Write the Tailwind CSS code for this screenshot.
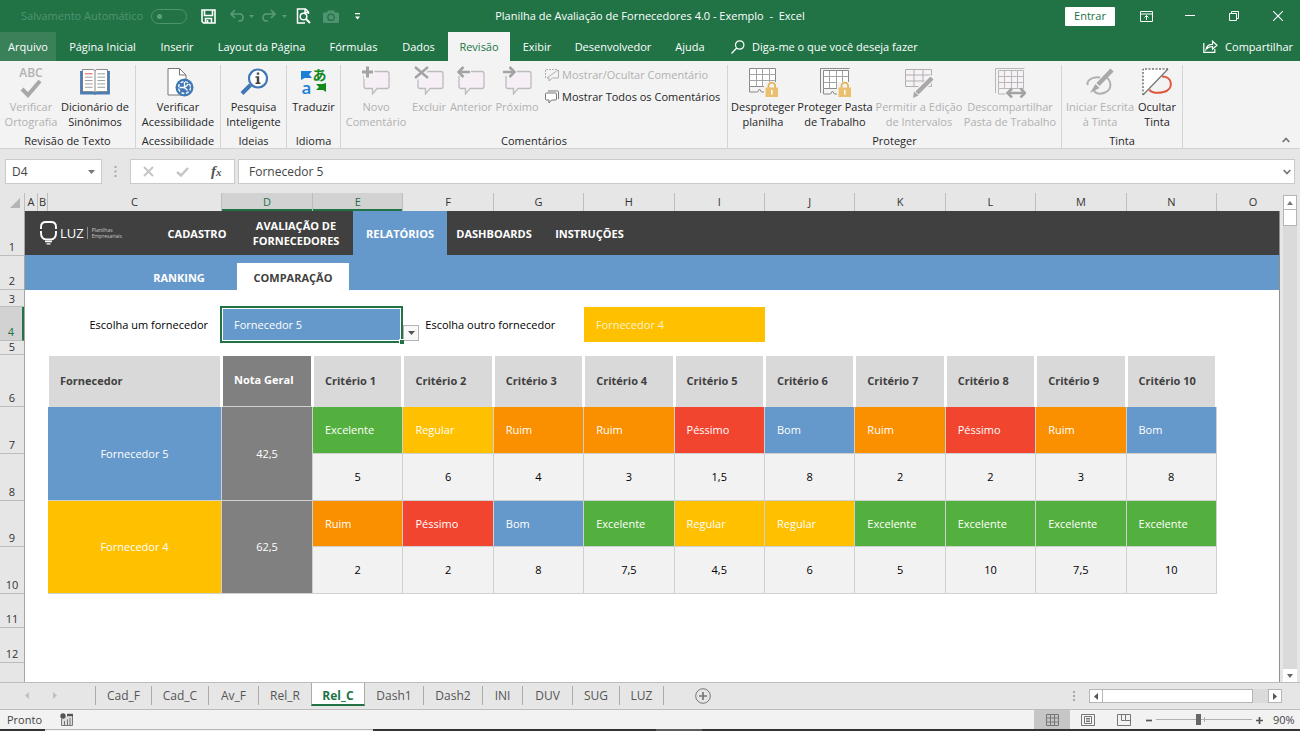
<!DOCTYPE html>
<html lang="pt-BR">
<head>
<meta charset="utf-8">
<meta name="viewport" content="width=device-width, initial-scale=1">
<title>Planilha de Avaliação de Fornecedores 4.0 - Exemplo - Excel</title>
<script src="https://cdn.jsdelivr.net/npm/@tailwindcss/browser@4"></script>
</head>
<body class="flex h-screen flex-col overflow-hidden bg-[#e6e6e6] font-['Open_Sans','Noto_Sans',sans-serif] text-[11px] leading-4 text-[#262626]">

<!-- Title bar and ribbon tabs -->
<header class="bg-[#217346] text-white">
  <div class="grid h-8 grid-cols-[1fr_auto_1fr] items-center">
    <div class="flex items-center pl-[21px]">
      <label for="autosave" class="w-[130px] whitespace-nowrap text-[#4f9470]">Salvamento Automático</label>
      <input id="autosave" type="checkbox" disabled class="h-[15px] w-9 appearance-none rounded-full border border-[#4f9470] before:ml-[5px] before:mt-[4px] before:block before:size-[5px] before:rounded-full before:bg-[#5f9f7e]">
      <button aria-label="Salvar" class="ml-[14px]"><svg class="size-[15px]" viewBox="0 0 15 15" fill="none" stroke="#fff" stroke-width="1.6"><path d="M1 1h13v13H2.500L1 12.500zM3.500 1v5.500h8V1M4.500 14V9.500h6V14M6.500 11v3"/></svg></button>
      <button aria-label="Desfazer" disabled class="ml-[13px]"><svg class="h-[14px] w-[25px]" viewBox="0 0 25 14" fill="none" stroke="#5a9a79" stroke-width="1.700"><path d="M6 1 2 5l4 4M2 5h8a3.500 3.500 0 0 1 1 7H9"/><path d="M20 6h5l-2.500 3z" fill="#5a9a79" stroke="none"/></svg></button>
      <button aria-label="Refazer" disabled class="ml-[8px]"><svg class="h-[14px] w-[25px]" viewBox="0 0 25 14" fill="none" stroke="#5a9a79" stroke-width="1.700"><path d="m9 1 4 4-4 4M13 5H5a3.500 3.500 0 0 0-1 7h2"/><path d="M20 6h5l-2.500 3z" fill="#5a9a79" stroke="none"/></svg></button>
      <button aria-label="Visualizar impressão" class="ml-[9px]"><svg class="h-4 w-[15px]" viewBox="0 0 15 16" fill="none" stroke="#fff" stroke-width="1.500"><path d="M12.500 6V4L9.500 1H1.500v14H9M9 1v3.500h3.500" /><circle cx="7.500" cy="8.500" r="3.300"/><path d="m10 11 4 4" stroke-width="2"/></svg></button>
      <button aria-label="Câmera" disabled class="ml-[12px]"><svg class="h-[13px] w-[16px]" viewBox="0 0 16 13"><path fill="#4f9470" d="M1 2.500h3L5 .5h6l1 2h3a1 1 0 0 1 1 1V12a1 1 0 0 1-1 1H1a1 1 0 0 1-1-1V3.500a1 1 0 0 1 1-1z"/><circle cx="8" cy="7.300" r="3.200" fill="none" stroke="#217346" stroke-width="1.300"/></svg></button>
      <button aria-label="Personalizar acesso rápido" class="ml-[16px]"><svg class="h-[7px] w-[5px]" viewBox="0 0 5 7" fill="#fff"><path d="M0 0h5v1.300H0zM0 3.500h5L2.500 6.500z"/></svg></button>
    </div>
    <h1 class="whitespace-pre">Planilha de Avaliação de Fornecedores 4.0 - Exemplo  -  Excel</h1>
    <div class="flex items-center justify-end">
      <button class="mr-[9px] h-[19px] w-[50px] rounded-[1px] bg-white leading-4 text-[#217346]">Entrar</button>
      <button aria-label="Opções da faixa" class="flex w-11 justify-center"><svg class="h-[11px] w-[13px]" viewBox="0 0 13 11" fill="none" stroke="#fff"><path d="M.5.5h12v10H.5zM.5 3h12M6.500 9V4.500M4.500 6.500l2-2 2 2"/></svg></button>
      <button aria-label="Minimizar" class="flex w-11 justify-center"><svg class="h-[11px] w-[10px]" viewBox="0 0 10 11" stroke="#fff"><path d="M0 4.500h10"/></svg></button>
      <button aria-label="Restaurar" class="flex w-11 justify-center"><svg class="size-[10px]" viewBox="0 0 10 10" fill="none" stroke="#fff"><path d="M.5 2.500h7v7h-7zM2.500 2.500v-2h7v7h-2"/></svg></button>
      <button aria-label="Fechar" class="flex w-11 justify-center"><svg class="size-[10px]" viewBox="0 0 10 10" stroke="#fff" stroke-width="1.100"><path d="m0 0 10 10M10 0 0 10"/></svg></button>
    </div>
  </div>
  <nav class="flex h-[29px] items-stretch font-medium">
    <button class="w-14 bg-[#3a8159]">Arquivo</button>
    <button class="w-[93px]">Página Inicial</button>
    <button class="w-14">Inserir</button>
    <button class="w-[113px]">Layout da Página</button>
    <button class="w-[71px]">Fórmulas</button>
    <button class="w-[59px]">Dados</button>
    <button class="w-[62px] bg-[#f3f3f3] text-[#217346]">Revisão</button>
    <button class="w-[54px]">Exibir</button>
    <button class="w-[98px]">Desenvolvedor</button>
    <button class="w-14">Ajuda</button>
    <button class="flex items-center gap-[7px] pl-[13px]"><svg class="size-[14px]" viewBox="0 0 14 14" fill="none" stroke="#fff" stroke-width="1.200"><circle cx="8.700" cy="5" r="4.200"/><path d="M5.700 8 .5 13.500"/></svg>Diga-me o que você deseja fazer</button>
    <button class="ml-auto flex items-center gap-[7px] pr-[7px]"><svg class="h-[13px] w-[15px]" viewBox="0 0 15 13" fill="none" stroke="#fff" stroke-width="1.200"><path d="M.8 3v9.400h11V9M3 9.500C3.500 6 6 4.300 9.500 4.300V1.200l4.500 4-4.500 4V6.500C7 6.500 5 7 3 9.500z"/></svg>Compartilhar</button>
  </nav>
</header>

<!-- Ribbon -->
<section aria-label="Revisão" class="flex h-[88px] border-b border-[#d2d2d2] bg-[#f3f3f3] pt-1 leading-[15px]">
  <div class="flex w-[136px] flex-col border-r border-[#d5d5d5]">
    <div class="flex h-[68px]">
      <button disabled class="flex w-[62px] flex-col items-center whitespace-nowrap text-[#b1b1b1]">
        <span class="flex h-[34px] w-full flex-col items-center"><span class="text-[12px] font-semibold leading-[15px]">ABC</span><svg class="h-[18px] w-[22px]" viewBox="0 0 22 18" fill="none" stroke="#a8a8a8" stroke-width="4"><path d="m2 9 6 6L20 1"/></svg></span>Verificar<br>Ortografia</button>
      <button class="flex w-[66px] flex-col items-center whitespace-nowrap">
        <span class="flex h-[34px] items-start pt-[4px]"><svg class="h-[26px] w-[30px]" viewBox="0 0 31 27"><path fill="#4a7eb8" d="M0 2h31v24.500H17l-1.500.5-1.500-.5H0z"/><path fill="#fff" stroke="#666" stroke-width=".8" d="M2.500.5H13q2 0 2.500 1.500Q16 .5 18 .5h10.500v23H18q-2 0-2.500 1-.5-1-2.500-1H2.500zM15.500 2v22"/><path stroke="#9a9a9a" d="M5 8.500h8M5 12h8M5 15.500h8M5 19h8M18 5h8M18 8.500h8M18 12h8M18 15.500h8M18 19h8"/><path stroke="#d8543c" d="M5 5h8"/></svg></span>Dicionário de<br>Sinônimos</button>
    </div>
    <span class="text-center">Revisão de Texto</span>
  </div>
  <div class="flex w-[85px] flex-col border-r border-[#d5d5d5]">
    <button class="flex h-[68px] flex-col items-center whitespace-nowrap">
      <span class="flex h-[34px] items-start pl-[4px] pt-[3px]"><svg class="h-[29px] w-[27px]" viewBox="0 0 27 29"><path fill="#fff" stroke="#777" d="M1 .5h11.500L19 7v20H1z"/><path fill="none" stroke="#777" d="M12.500.5V7H19"/><circle cx="17.500" cy="19.500" r="9" fill="#3f78b5"/><g fill="none" stroke="#fff" stroke-width="1.300"><circle cx="17.500" cy="19.500" r="6" stroke-dasharray="3 1.700"/><path d="M17.500 14v5.500l4-3.500M17.500 19.500h-5M17.500 19.500l3 3"/></g></svg></span>Verificar<br>Acessibilidade</button>
    <span class="text-center">Acessibilidade</span>
  </div>
  <div class="flex w-[66px] flex-col border-r border-[#d5d5d5]">
    <button class="flex h-[68px] flex-col items-center whitespace-nowrap">
      <span class="flex h-[34px] items-start pt-[3px]"><svg class="h-[28px] w-[28px]" viewBox="0 0 28 28"><path stroke="#3f78b5" stroke-width="4" d="m2 25.500 8.500-8.500"/><circle cx="18" cy="10.500" r="9" fill="#fff" stroke="#3f78b5" stroke-width="2.200"/><path fill="#444" d="M16.800 4.500h2.400v2.200h-2.400zM15.500 8.300h3.700v6.200h1.300V16h-5v-1.500h1.300V9.800h-1.300z"/></svg></span>Pesquisa<br>Inteligente</button>
    <span class="text-center">Ideias</span>
  </div>
  <div class="flex w-[54px] flex-col border-r border-[#d5d5d5]">
    <button class="flex h-[68px] flex-col items-center whitespace-nowrap">
      <span class="grid h-[34px] grid-cols-[12px_14px] grid-rows-[15px_16px] content-start text-center font-semibold"><svg class="mt-[6px] h-[9px] w-[11px]" viewBox="0 0 11 9" fill="#1a7fd6"><path d="M0 0h11L8 3.500 11 7H3.500L0 9z"/></svg><span class="font-['Noto_Sans_CJK_JP',sans-serif] text-[14px] leading-[18px] text-[#128a1c]">あ</span><span class="text-[17px] leading-[16px] text-[#1a7fd6]">a</span><svg class="ml-[3px] mt-[3px] h-[9px] w-[10px]" viewBox="0 0 10 9" fill="#128a1c"><path d="M0 1h6.500L10 0v9L7 7H0l3-3z"/></svg></span>Traduzir</button>
    <span class="text-center">Idioma</span>
  </div>
  <div class="flex w-[387px] flex-col border-r border-[#d5d5d5]">
    <div class="flex h-[68px]">
      <button disabled class="flex w-[70px] flex-col items-center whitespace-nowrap text-[#b1b1b1]">
        <span class="flex h-[34px] items-start pt-[1px]"><svg class="h-[29px] w-[28px]" viewBox="0 0 28 29"><path fill="#f6eff6" stroke="#bcbcbc" stroke-width="1.300" d="M4 5.500h21q2 0 2 2v13q0 2-2 2H15L10.500 28v-5.500H4q-2 0-2-2v-13q0-2 2-2z"/><path stroke="#f3f3f3" stroke-width="7" d="M5.500 0v13M0 6h12.500"/><path stroke="#a3a3a3" stroke-width="3" d="M5.500.5v11M0 6h11"/></svg></span>Novo<br>Comentário</button>
      <button disabled class="flex w-9 flex-col items-center whitespace-nowrap text-[#b1b1b1]">
        <span class="flex h-[34px] items-start pt-[1px]"><svg class="h-[29px] w-[30px]" viewBox="0 0 30 29"><path fill="#f6eff6" stroke="#bcbcbc" stroke-width="1.300" d="M6 5.500h21q2 0 2 2v13q0 2-2 2H16L11.500 28v-5.500H6q-2 0-2-2v-13q0-2 2-2z"/><path stroke="#f3f3f3" stroke-width="6" d="m0 0 15 13M15 0 0 13"/><path stroke="#a3a3a3" stroke-width="2.400" d="m1 1 13 11M14 1 1 12"/></svg></span>Excluir</button>
      <button disabled class="flex w-12 flex-col items-center whitespace-nowrap text-[#b1b1b1]">
        <span class="flex h-[34px] items-start pt-[1px]"><svg class="h-[29px] w-[28px]" viewBox="0 0 28 29"><path fill="#f6eff6" stroke="#bcbcbc" stroke-width="1.300" d="M4 5.500h21q2 0 2 2v13q0 2-2 2H13L8.500 28v-5.500H4q-2 0-2-2v-13q0-2 2-2z"/><path stroke="#f3f3f3" stroke-width="8" d="M0 6h14"/><path fill="none" stroke="#a3a3a3" stroke-width="2.500" d="M13 6H2M6.500 1 1.500 6l5 5"/></svg></span>Anterior</button>
      <button disabled class="flex w-11 flex-col items-center whitespace-nowrap text-[#b1b1b1]">
        <span class="flex h-[34px] items-start pt-[1px]"><svg class="h-[29px] w-[29px]" viewBox="0 0 29 29"><path fill="#f6eff6" stroke="#bcbcbc" stroke-width="1.300" d="M5 5.500h21q2 0 2 2v13q0 2-2 2H15L10.500 28v-5.500H5q-2 0-2-2v-13q0-2 2-2z"/><path stroke="#f3f3f3" stroke-width="8" d="M0 6h14"/><path fill="none" stroke="#a3a3a3" stroke-width="2.500" d="M0 6h11M6.500 1l5 5-5 5"/></svg></span>Próximo</button>
      <div class="flex flex-col items-start gap-[7px] pl-[6px] pt-[2px]">
        <button disabled class="flex items-center gap-[3px] whitespace-nowrap text-[#b1b1b1]"><svg class="h-[14px] w-[14px]" viewBox="0 0 14 14" fill="none" stroke="#b0b0b0"><path stroke-dasharray="2 1" d="M.5 10V1.500h12"/><path d="M13.500 2v8H7.500L4 13v-3H2L13 2"/></svg>Mostrar/Ocultar Comentário</button>
        <button class="flex items-center gap-[3px] whitespace-nowrap"><svg class="h-[14px] w-[14px]" viewBox="0 0 14 14" fill="#fff" stroke="#777"><path d="M3 1h9.500q1 0 1 1v7"/><path d="M1.500 3h9q1 0 1 1v5q0 1-1 1H6.500L4 13v-3H1.500q-1 0-1-1V4q0-1 1-1z"/></svg>Mostrar Todos os Comentários</button>
      </div>
    </div>
    <span class="text-center">Comentários</span>
  </div>
  <div class="flex w-[334px] flex-col border-r border-[#d5d5d5]">
    <div class="flex h-[68px]">
      <button class="flex w-[70px] flex-col items-center whitespace-nowrap">
        <span class="flex h-[34px] items-start pt-[3px]"><svg class="h-[30px] w-[29px]" viewBox="0 0 29 30"><path fill="#fff" stroke="#8a8a8a" d="M.5.5h26v18H.5z"/><path fill="none" stroke="#a5a5a5" d="M.5 6.500h26M.5 12.500h26M7.500.5v18M13.500.5v18M20.500.5v18"/><path fill="#f3f3f3" stroke="#888" d="M.5 18.500V24h8l2-3 2 3h4"/><path fill="#f3f3f3" d="M15 14h14v16H15z"/><path fill="none" stroke="#e3b45c" stroke-width="1.800" d="M19.500 21v-3a3.300 3.300 0 0 1 6.600 0v3"/><path fill="#eac06f" d="M16.500 19.500H29V29H16.500z"/><path stroke="#fff" stroke-width="1.600" d="M22.800 22v4.500"/></svg></span>Desproteger<br>planilha</button>
      <button class="flex w-[74px] flex-col items-center whitespace-nowrap">
        <span class="flex h-[34px] items-start pt-[3px]"><svg class="h-[30px] w-[31px]" viewBox="0 0 31 30"><path fill="none" stroke="#888" d="M.5 25V.5h29"/><path fill="#fff" stroke="#8a8a8a" d="M3.500 2.500h25v18h-25z"/><path fill="none" stroke="#a5a5a5" d="M3.500 8.500h25M3.500 14.500h25M9.500 2.500v18M16.500 2.500v18M22.500 2.500v18"/><path fill="#f3f3f3" stroke="#888" d="M3.500 20.500V26h7l2-3 2 3h3"/><path fill="#f3f3f3" d="M17 14h14v16H17z"/><path fill="none" stroke="#e3b45c" stroke-width="1.800" d="M21.500 21v-3a3.300 3.300 0 0 1 6.600 0v3"/><path fill="#eac06f" d="M18.500 19.500H31V29H18.500z"/><path stroke="#fff" stroke-width="1.600" d="M24.800 22v4.500"/></svg></span>Proteger Pasta<br>de Trabalho</button>
      <button disabled class="flex w-[94px] flex-col items-center whitespace-nowrap text-[#b1b1b1]">
        <span class="flex h-[34px] items-start pt-[4px]"><svg class="h-[29px] w-[29px]" viewBox="0 0 29 29"><path fill="#f6f2f6" stroke="#b0b0b0" d="M.5.500h26v17H.5zM.5 6h26M.5 12h26M9 .5v17M18 .5v17"/><path stroke="#f3f3f3" stroke-width="7" d="M28 8 10 26"/><path stroke="#a8a8a8" stroke-width="4.500" d="M27 9 12 24"/><path fill="#a8a8a8" d="m9 22.500 4.500 4L8 29z"/></svg></span>Permitir a Edição<br>de Intervalos</button>
      <button disabled class="flex w-[88px] flex-col items-center text-[#b1b1b1]">
        <span class="flex h-[34px] items-start pt-[3px]"><svg class="h-[30px] w-[31px]" viewBox="0 0 31 30"><path fill="none" stroke="#b8b8b8" d="M.5 25V.5h29"/><path fill="#f6f2f6" stroke="#b8b8b8" d="M3.500 2.500h25v18h-25zM3.500 8.500h25M3.500 14.500h25M9.500 2.500v18M16.500 2.500v18M22.500 2.500v18M3.500 20.500V26h7"/><path fill="none" stroke="#a3a3a3" stroke-width="2.600" d="M13 25h16M17 20.500 12.500 25l4.500 4.500M25.500 20.500 30 25l-4.500 4.500"/></svg></span><span class="whitespace-nowrap">Descompartilhar<br>Pasta de Trabalho</span></button>
    </div>
    <span class="text-center">Proteger</span>
  </div>
  <div class="flex w-[121px] flex-col border-r border-[#d5d5d5]">
    <div class="flex h-[68px]">
      <button disabled class="flex w-[76px] flex-col items-center whitespace-nowrap text-[#b1b1b1]">
        <span class="flex h-[34px] items-start pt-[3px]"><svg class="h-[29px] w-[28px]" viewBox="0 0 28 29" fill="none" stroke="#b0b0b0"><path stroke-width="2" d="M14 9.500C5 8 0 14 2 17M20 9c6 4 6 13-1 15.500C13 27 8 25 8 21.500"/><path stroke="#a8a8a8" stroke-width="4.500" d="M26 2 12 16.500"/><path fill="#a8a8a8" stroke="none" d="m9.500 16 4 4L4 25z"/></svg></span>Iniciar Escrita<br>à Tinta</button>
      <button class="flex w-[38px] flex-col items-center whitespace-nowrap">
        <span class="flex h-[34px] items-start pt-[3px]"><svg class="h-[29px] w-[30px]" viewBox="0 0 30 29" fill="none"><path stroke="#e0553d" stroke-width="2" d="M20 8.500c11 0 12 13 1.500 15.500C14 26 8 24 7.500 21.500"/><path fill="#fff" d="M1 1h25L1 27z"/><path stroke="#333" stroke-dasharray="2 1.500" d="M26 1H1v26"/><path stroke="#777" stroke-width="1.300" d="M26 1 1 27"/></svg></span>Ocultar<br>Tinta</button>
    </div>
    <span class="text-center">Tinta</span>
  </div>
  <button aria-label="Recolher faixa" class="mb-[5px] ml-auto mr-[10px] self-end"><svg class="h-[6px] w-[8px]" viewBox="0 0 8 6" fill="none" stroke="#777" stroke-width="1.800"><path d="m.7 5 3.300-3.500L7.300 5"/></svg></button>
</section>

<!-- Formula bar -->
<section aria-label="Barra de fórmulas" class="flex h-11 items-start pl-[5px] pr-[5px] pt-[10px] text-[12px]">
  <div class="flex h-[25px] w-[97px] items-center border border-[#cacaca] bg-white">
    <input aria-label="Caixa de nome" value="D4" class="min-w-0 flex-1 pl-[6px] text-[#444] outline-none">
    <button aria-label="Nomes" class="px-[6px]"><svg class="h-[4px] w-[7px]" viewBox="0 0 7 4" fill="#777"><path d="M0 0h7L3.500 4z"/></svg></button>
  </div>
  <svg class="ml-[12px] mt-[7px] h-[11px] w-[3px]" viewBox="0 0 3 11" fill="#a8a8a8"><path d="M.5 0h2v2h-2zM.5 4.500h2v2h-2zM.5 9h2v2h-2z"/></svg>
  <div class="ml-[13px] flex h-[25px] w-[105px] items-center border border-[#cacaca] bg-white">
    <button aria-label="Cancelar" disabled class="ml-[12px]"><svg class="size-[11px]" viewBox="0 0 11 11" stroke="#c4c4c4" stroke-width="1.800"><path d="m1 1 9 9M10 1l-9 9"/></svg></button>
    <button aria-label="Inserir" disabled class="ml-[22px]"><svg class="h-[10px] w-[13px]" viewBox="0 0 13 10" fill="none" stroke="#c4c4c4" stroke-width="2.400"><path d="m1 5 4 3.500L12 1"/></svg></button>
    <button aria-label="Inserir função" class="ml-[22px] font-['Liberation_Serif',serif] text-[15px] font-bold italic leading-4 text-[#555]">f<span class="text-[11px]">x</span></button>
  </div>
  <div class="ml-[3px] flex h-[25px] flex-1 items-center border border-[#cacaca] bg-white">
    <input aria-label="Fórmula" value="Fornecedor 5" class="min-w-0 flex-1 pl-[10px] text-[12px] text-[#444] outline-none">
    <button aria-label="Expandir" class="px-[3px]"><svg class="h-[6px] w-[8px]" viewBox="0 0 8 6" fill="none" stroke="#777" stroke-width="1.800"><path d="m.7 1 3.300 3.500L7.300 1"/></svg></button>
  </div>
</section>

<!-- Worksheet -->
<main class="flex min-h-0 flex-1">
  <div class="flex min-w-0 flex-1 flex-col">
    <div class="grid h-[18px] grid-cols-[25px_13px_10px_174px_91px_repeat(10,1fr)_63px] text-center leading-[18px] text-[#333] *:border-r *:border-[#bdbdbd]">
      <button aria-label="Selecionar tudo" class="flex items-end justify-end pb-[3px] pr-[4px]"><svg class="size-[10px]" viewBox="0 0 10 10" fill="#b5b5b5"><path d="M10 0v10H0z"/></svg></button>
      <div>A</div><div>B</div><div>C</div>
      <div class="bg-[#d2d2d2] text-[#217346] shadow-[inset_0_-2px_0_#217346]">D</div>
      <div class="bg-[#d2d2d2] text-[#217346] shadow-[inset_0_-2px_0_#217346]">E</div>
      <div>F</div><div>G</div><div>H</div><div>I</div><div>J</div><div>K</div><div>L</div><div>M</div><div>N</div>
      <div class="border-r-0! pl-[9px]">O</div>
    </div>
    <div class="flex min-h-0 flex-1">
      <div class="flex w-[25px] shrink-0 flex-col border-r border-[#a6a6a6] text-center text-[#333] *:flex *:shrink-0 *:items-end *:justify-center *:border-b *:border-[#bdbdbd] *:leading-[15px]">
        <div class="h-[45px] pb-px">1</div>
        <div class="h-[34px] pb-px">2</div>
        <div class="h-[17px]">3</div>
        <div class="h-[34px] border-r-2 border-r-[#217346]! bg-[#d2d2d2] pb-px text-[#217346]">4</div>
        <div class="h-[14px]">5</div>
        <div class="h-[52px] pb-px">6</div>
        <div class="h-[47px] pb-px">7</div>
        <div class="h-[47px] pb-px">8</div>
        <div class="h-[46px] pb-px">9</div>
        <div class="h-[47px] pb-px">10</div>
        <div class="h-[34px] pb-px">11</div>
        <div class="h-[35px] pb-px">12</div>
      </div>
      <div class="flex min-w-0 flex-1 flex-col border-r border-[#8f8f8f] bg-white">
        <nav class="flex h-11 shrink-0 items-stretch bg-[#404040] font-bold leading-[15px] text-white">
          <div class="flex w-[130px] items-center pl-[15px]">
            <svg class="h-[24px] w-[17px]" viewBox="0 0 17 24" fill="none" stroke="#fff" stroke-width="1.900"><path d="M1 8V6q0-5 5-5h5q5 0 5 5v2M1 10v2q0 6 5 6.500h5q5-.5 5-6.500v-2"/><path d="M5 20.500h7M6.500 22.800h4" stroke-width="1.300"/></svg>
            <span class="ml-[3px] text-[13px] font-medium">LUZ</span>
            <span class="ml-[3px] border-l border-[#8a8a8a] pl-[4px] text-[5px] font-normal leading-[6px] text-[#c8c8c8]">Planilhas<br>Empresariais</span>
          </div>
          <a href="#cadastro" class="flex w-[84px] items-center justify-center">CADASTRO</a>
          <a href="#avaliacao" class="flex w-[114px] items-center justify-center text-center">AVALIAÇÃO DE<br>FORNECEDORES</a>
          <a href="#relatorios" class="flex w-[94px] items-center justify-center bg-[#6699cb]">RELATÓRIOS</a>
          <a href="#dashboards" class="flex w-[94px] items-center justify-center">DASHBOARDS</a>
          <a href="#instrucoes" class="flex w-[97px] items-center justify-center">INSTRUÇÕES</a>
        </nav>
        <nav class="flex h-[35px] shrink-0 items-end bg-[#6699cb] pl-24 font-bold text-white">
          <a href="#ranking" class="flex h-[27px] w-[116px] items-center justify-center pt-[2px]">RANKING</a>
          <a href="#comparacao" class="flex h-[27px] w-[112px] items-center justify-center bg-white pt-[2px] text-[#404040]">COMPARAÇÃO</a>
        </nav>
        <div class="mt-4 grid h-[35px] shrink-0 grid-cols-[195px_93px_repeat(10,1fr)_63px] items-center text-black">
          <label for="forn-a" class="pr-[12px] text-right">Escolha um fornecedor</label>
          <div class="relative col-span-2 h-[37px] border-2 border-[#217346] bg-white p-px">
            <select id="forn-a" class="block size-full appearance-none bg-[#6699cb] pl-[11px] text-white outline-none"><option>Fornecedor 5</option><option>Fornecedor 4</option></select>
            <span class="pointer-events-none absolute -right-[18px] bottom-0 flex size-4 items-center justify-center border border-[#b5b5b5] bg-[#f8f8f8]"><svg class="h-[4px] w-[7px]" viewBox="0 0 7 4" fill="#555"><path d="M0 0h7L3.500 4z"/></svg></span>
            <span class="absolute -bottom-[3px] -right-[3px] size-[5px] border-l border-t border-white bg-[#217346]"></span>
          </div>
          <label for="forn-b" class="col-span-2 pl-[22px]">Escolha outro fornecedor</label>
          <select id="forn-b" class="col-span-2 h-[35px] appearance-none bg-[#ffc000] pl-[12px] text-[#fff3cc] outline-none"><option>Fornecedor 4</option><option>Fornecedor 5</option></select>
        </div>
        <div class="mt-[14px] pl-[23px] pr-[62px]">
          <table class="w-full table-fixed border-separate border-spacing-0 text-left text-white [&_td]:border-b [&_td]:border-r [&_td]:border-[#d0d0d0] [&_td]:py-0 [&_th]:border-l [&_th]:border-r-2 [&_th]:border-t [&_th]:border-white [&_th]:p-0 [&_th]:pb-[2px] [&_th]:pl-[11px]">
            <colgroup><col class="w-[174px]"><col class="w-[91px]"><col span="10"></colgroup>
            <thead>
              <tr class="h-[52px] bg-[#d9d9d9] font-semibold text-[#404040]">
                <th>Fornecedor</th><th class="border-b border-b-[#d0d0d0]! bg-[#808080] text-white">Nota Geral</th><th>Critério 1</th><th>Critério 2</th><th>Critério 3</th><th>Critério 4</th><th>Critério 5</th><th>Critério 6</th><th>Critério 7</th><th>Critério 8</th><th>Critério 9</th><th>Critério 10</th>
              </tr>
            </thead>
            <tbody>
              <tr class="h-[47px] *:pl-[12px]">
                <td rowspan="2" class="bg-[#6699cb] pl-0! text-center">Fornecedor 5</td>
                <td rowspan="2" class="bg-[#808080] pl-0! text-center">42,5</td>
                <td class="bg-[#54b03e]">Excelente</td><td class="bg-[#ffc000]">Regular</td><td class="bg-[#fa9000]">Ruim</td><td class="bg-[#fa9000]">Ruim</td><td class="bg-[#f2452f]">Péssimo</td><td class="bg-[#6699cb]">Bom</td><td class="bg-[#fa9000]">Ruim</td><td class="bg-[#f2452f]">Péssimo</td><td class="bg-[#fa9000]">Ruim</td><td class="bg-[#6699cb]">Bom</td>
              </tr>
              <tr class="h-[47px] bg-[#f2f2f2] text-center text-black"><td>5</td><td>6</td><td>4</td><td>3</td><td>1,5</td><td>8</td><td>2</td><td>2</td><td>3</td><td>8</td></tr>
              <tr class="h-[46px] *:pl-[12px]">
                <td rowspan="2" class="bg-[#ffc000] pl-0! text-center">Fornecedor 4</td>
                <td rowspan="2" class="bg-[#808080] pl-0! text-center">62,5</td>
                <td class="bg-[#fa9000]">Ruim</td><td class="bg-[#f2452f]">Péssimo</td><td class="bg-[#6699cb]">Bom</td><td class="bg-[#54b03e]">Excelente</td><td class="bg-[#ffc000]">Regular</td><td class="bg-[#ffc000]">Regular</td><td class="bg-[#54b03e]">Excelente</td><td class="bg-[#54b03e]">Excelente</td><td class="bg-[#54b03e]">Excelente</td><td class="bg-[#54b03e]">Excelente</td>
              </tr>
              <tr class="h-[47px] bg-[#f2f2f2] text-center text-black"><td>2</td><td>2</td><td>8</td><td>7,5</td><td>4,5</td><td>6</td><td>5</td><td>10</td><td>7,5</td><td>10</td></tr>
            </tbody>
          </table>
        </div>
      </div>
    </div>
  </div>
  <div class="flex w-5 flex-col px-[3px] pt-[2px]">
    <button aria-label="Rolar para cima" class="flex h-[15px] items-center justify-center border border-[#b5b5b5] bg-white"><svg class="h-[4px] w-[6px]" viewBox="0 0 6 4" fill="#777"><path d="M0 4h6L3 0z"/></svg></button>
    <div class="flex-1 bg-[#dadada]"><div class="h-4 border border-t-0 border-[#b5b5b5] bg-white"></div></div>
    <button aria-label="Rolar para baixo" class="flex h-[13px] items-center justify-center bg-white"><svg class="h-[4px] w-[6px]" viewBox="0 0 6 4" fill="#666"><path d="M0 0h6L3 4z"/></svg></button>
  </div>
</main>

<!-- Sheet tabs -->
<nav aria-label="Planilhas" class="flex h-7 items-start border-b border-t border-[#bdbdbd] text-[12px] text-[#555]">
  <div class="flex h-6 w-[95px] items-center gap-[24px] pl-[25px]">
    <button aria-label="Anterior"><svg class="h-[7px] w-[4px]" viewBox="0 0 4 7" fill="#c0c0c0"><path d="M4 0v7L0 3.500z"/></svg></button>
    <button aria-label="Próxima"><svg class="h-[7px] w-[4px]" viewBox="0 0 4 7" fill="#c0c0c0"><path d="M0 0v7l4-3.500z"/></svg></button>
  </div>
  <div class="flex items-start *:mt-[3px] *:h-[19px] *:border-[#ababab] *:leading-[17px]">
    <button class="w-[57px] border-x">Cad_F</button>
    <button class="w-[57px] border-r">Cad_C</button>
    <button class="w-[50px] border-r">Av_F</button>
    <button class="w-[52px]">Rel_R</button>
    <button class="mt-0! h-[23px]! w-[54px] border-x border-b-2 border-b-[#217346]! bg-white pt-[3px] font-bold text-[#217346]">Rel_C</button>
    <button class="w-[59px] border-r">Dash1</button>
    <button class="w-[59px] border-r">Dash2</button>
    <button class="w-10 border-r">INI</button>
    <button class="w-[50px] border-r">DUV</button>
    <button class="w-[47px] border-r">SUG</button>
    <button class="w-11 border-r">LUZ</button>
  </div>
  <button aria-label="Nova planilha" class="ml-[31px] mt-[5px]"><svg class="size-[16px]" viewBox="0 0 16 16" fill="none" stroke="#777"><circle cx="8" cy="8" r="7.300"/><path d="M8 4v8M4 8h8" stroke-width="1.700"/></svg></button>
  <svg class="ml-auto mt-[8px] h-[10px] w-[2px]" viewBox="0 0 2 10" fill="#a8a8a8"><path d="M0 0h2v2H0zM0 4h2v2H0zM0 8h2v2H0z"/></svg>
  <div class="ml-[14px] mr-[18px] mt-[6px] flex h-[14px] w-[193px] bg-[#dadada]">
    <button aria-label="Rolar para a esquerda" class="flex w-[14px] items-center justify-center border border-[#b5b5b5] bg-white"><svg class="h-[7px] w-[4px]" viewBox="0 0 4 7" fill="#555"><path d="M4 0v7L0 3.500z"/></svg></button>
    <div class="w-[150px] border border-l-0 border-[#b5b5b5] bg-white"></div>
    <button aria-label="Rolar para a direita" class="ml-auto flex w-[14px] items-center justify-center border border-[#b5b5b5] bg-white"><svg class="h-[7px] w-[4px]" viewBox="0 0 4 7" fill="#555"><path d="M0 0v7l4-3.500z"/></svg></button>
  </div>
</nav>

<!-- Status bar -->
<footer class="flex h-[19px] items-center bg-[#f2f2f2] pl-[7px] pr-[5px] text-[#444]">
  <span class="font-medium">Pronto</span>
  <svg class="ml-[18px] h-[13px] w-[13px]" viewBox="0 0 13 13" fill="none" stroke="#777"><path fill="#ddd" d="M1.500 5.500V12.500h11V1"/><circle cx="3" cy="3" r="2.700" fill="#555" stroke="none"/><path d="M4.500 8v4M7.500 6.500V12M10 5v7"/><path stroke="#555" stroke-width="2.400" d="M7 2h6"/></svg>
  <button aria-label="Normal" class="ml-auto flex h-[19px] w-9 items-center justify-center bg-[#c6c6c6]"><svg class="h-[12px] w-[13px]" viewBox="0 0 13 12" fill="none" stroke="#777"><path d="M.5.5h12v11H.5zM.5 4h12M.5 8h12M4.500.5v11M8.500.5v11"/></svg></button>
  <button aria-label="Layout da página" class="flex w-9 justify-center"><svg class="h-[12px] w-[14px]" viewBox="0 0 14 12" fill="none" stroke="#777"><path d="M.5.5h13v11H.5zM3.500 2.500h7v7h-7zM5 4.500h4M5 6h4M5 7.500h4"/></svg></button>
  <button aria-label="Quebra de página" class="flex w-9 justify-center"><svg class="h-[12px] w-[14px]" viewBox="0 0 14 12" fill="none" stroke="#777"><path d="M.5.5h13v11H.5zM4.500.5v6h4v-6M8.500 6.500h5"/></svg></button>
  <button aria-label="Diminuir zoom" class="ml-[4px]"><svg class="h-[8px] w-[6px]" viewBox="0 0 6 8" stroke="#555" stroke-width="1.700"><path d="M0 4.500h6"/></svg></button>
  <input aria-label="Zoom" type="range" min="10" max="190" value="90" class="mx-[4px] h-[11px] w-[96px] appearance-none bg-[linear-gradient(#b0b0b0,#b0b0b0),linear-gradient(#b0b0b0,#b0b0b0)] bg-[length:100%_1px,1px_5px] bg-center bg-no-repeat [&::-webkit-slider-thumb]:h-[11px] [&::-webkit-slider-thumb]:w-[5px] [&::-webkit-slider-thumb]:appearance-none [&::-webkit-slider-thumb]:bg-[#666]">
  <button aria-label="Aumentar zoom"><svg class="h-[8px] w-[7px]" viewBox="0 0 7 8" stroke="#555" stroke-width="1.700"><path d="M0 4.500h7M3.500 1v7"/></svg></button>
  <span class="ml-[10px] w-[22px] whitespace-nowrap">90%</span>
</footer>
<div class="flex h-[2px] bg-[#333]"><div class="w-[45px]"></div><div class="w-[328px] border-t border-[#b5b5b5] bg-[#f2f2f2]"></div><div class="ml-[283px] w-[46px] bg-[#5c5c5c]"></div></div>
</body>
</html>
